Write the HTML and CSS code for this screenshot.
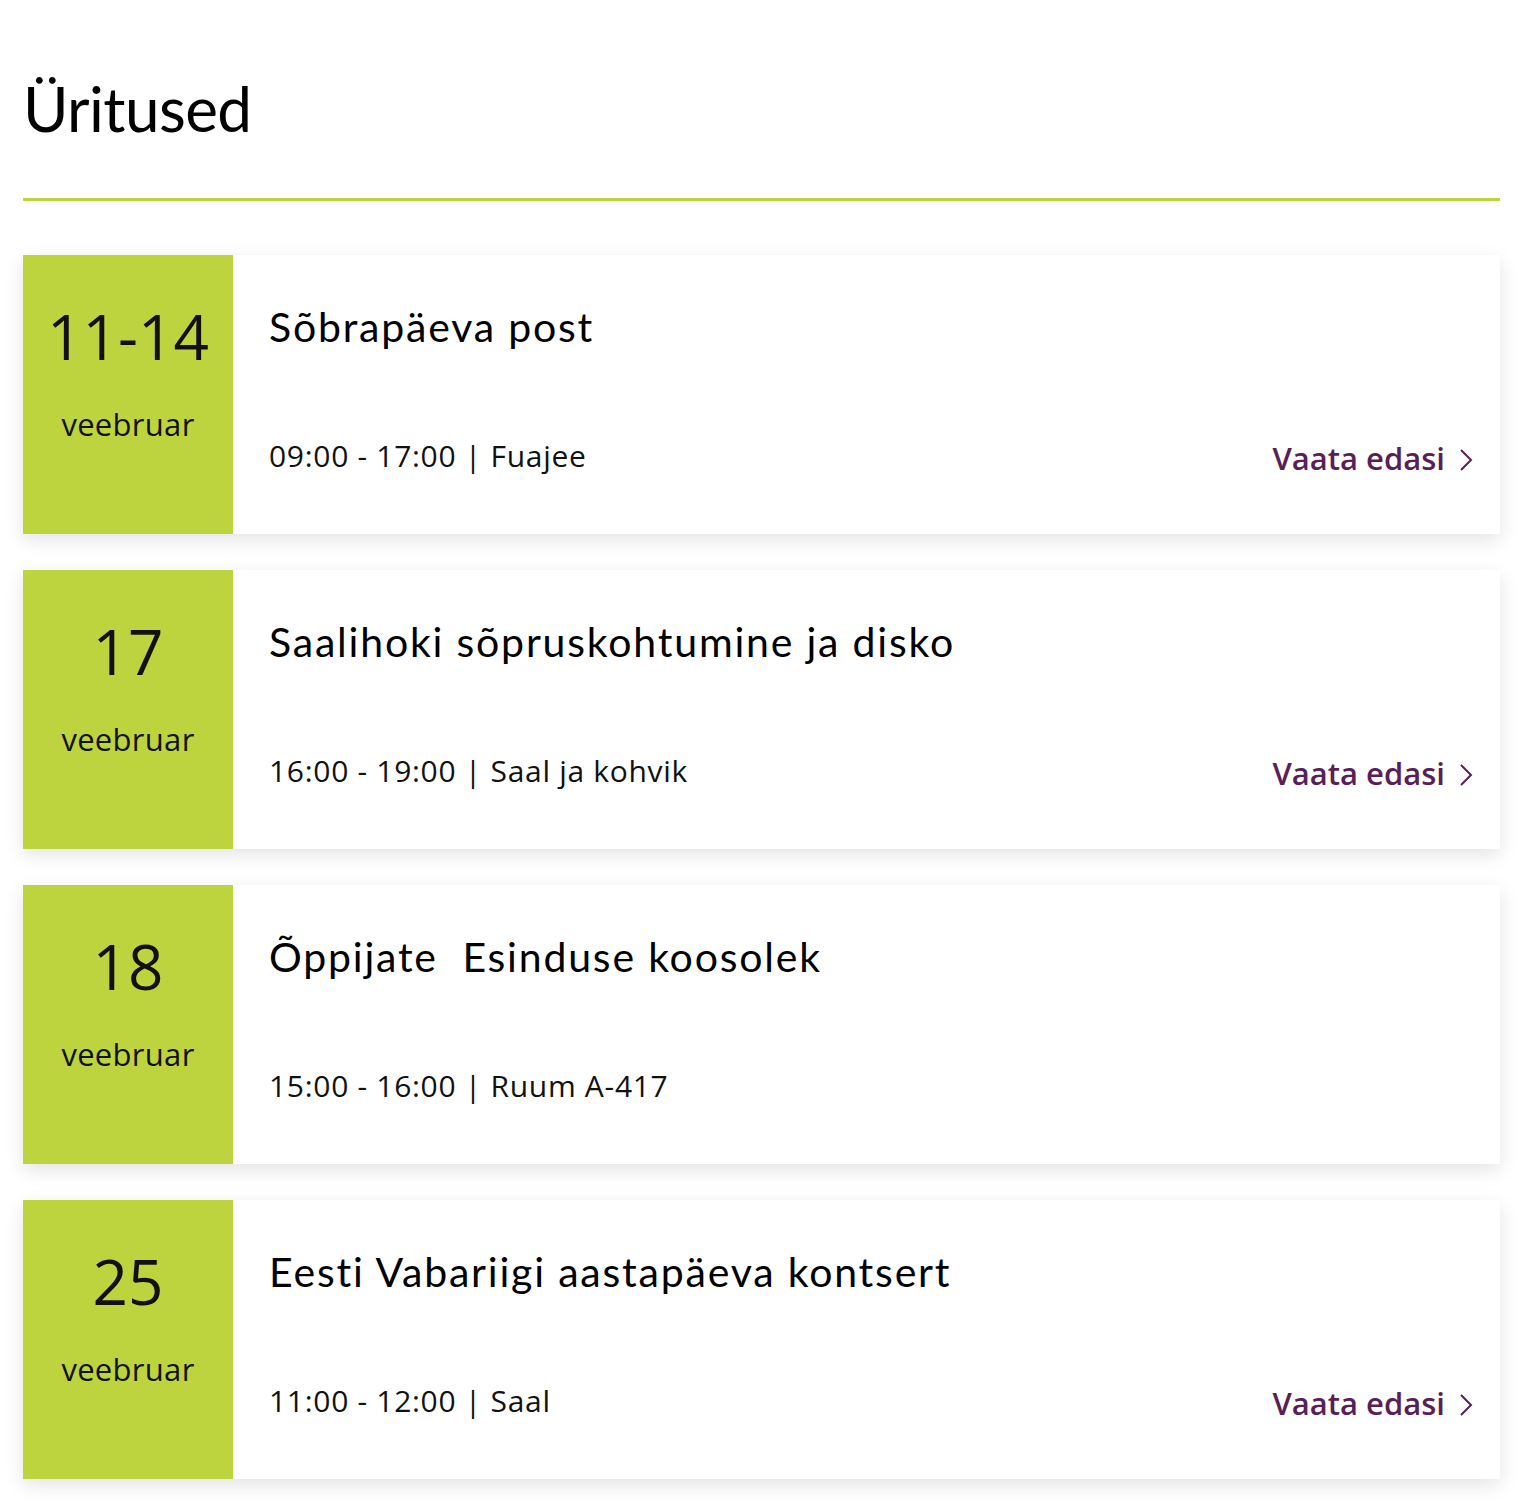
FILE: index.html
```html
<!DOCTYPE html>
<html lang="et">
<head>
<meta charset="utf-8">
<title>Üritused</title>
<link rel="stylesheet" href="styles.css">
</head>
<body>
<main class="page">
  <h1 class="page-title">Üritused</h1>
  <div class="rule"></div>
  <div class="events">
    <article class="event">
      <div class="event-date">
        <div class="event-day">11-14</div>
        <div class="event-month">veebruar</div>
      </div>
      <div class="event-body">
        <h2 class="event-title">Sõbrapäeva post</h2>
        <div class="event-foot">
          <span class="event-meta">09:00 - 17:00 | Fuajee</span>
          <a class="event-link" href="#">Vaata edasi<svg class="chev" viewBox="0 0 14 24" width="14" height="24"><path d="M2 2 L12 12 L2 22" fill="none" stroke="currentColor" stroke-width="2"/></svg></a>
        </div>
      </div>
    </article>
    <article class="event">
      <div class="event-date">
        <div class="event-day">17</div>
        <div class="event-month">veebruar</div>
      </div>
      <div class="event-body">
        <h2 class="event-title">Saalihoki sõpruskohtumine ja disko</h2>
        <div class="event-foot">
          <span class="event-meta">16:00 - 19:00 | Saal ja kohvik</span>
          <a class="event-link" href="#">Vaata edasi<svg class="chev" viewBox="0 0 14 24" width="14" height="24"><path d="M2 2 L12 12 L2 22" fill="none" stroke="currentColor" stroke-width="2"/></svg></a>
        </div>
      </div>
    </article>
    <article class="event">
      <div class="event-date">
        <div class="event-day">18</div>
        <div class="event-month">veebruar</div>
      </div>
      <div class="event-body">
        <h2 class="event-title">Õppijate&nbsp; Esinduse koosolek</h2>
        <div class="event-foot">
          <span class="event-meta">15:00 - 16:00 | Ruum A-417</span>
        </div>
      </div>
    </article>
    <article class="event">
      <div class="event-date">
        <div class="event-day">25</div>
        <div class="event-month">veebruar</div>
      </div>
      <div class="event-body">
        <h2 class="event-title">Eesti Vabariigi aastapäeva kontsert</h2>
        <div class="event-foot">
          <span class="event-meta">11:00 - 12:00 | Saal</span>
          <a class="event-link" href="#">Vaata edasi<svg class="chev" viewBox="0 0 14 24" width="14" height="24"><path d="M2 2 L12 12 L2 22" fill="none" stroke="currentColor" stroke-width="2"/></svg></a>
        </div>
      </div>
    </article>
  </div>
</main>
</body>
</html>
```
FILE: styles.css
```css
* { box-sizing: border-box; }
html, body { margin: 0; padding: 0; background: #fff; }
body {
  font-family: "Open Sans", "Liberation Sans", sans-serif;
  color: #111;
}
.page {
  padding: 77px 20px 30px 23px;
}
.page-title {
  margin: 0;
  font-family: Lato, "Noto Sans", sans-serif;
  font-weight: 400;
  font-size: 62px;
  line-height: 62px;
  letter-spacing: -0.6px;
  color: #000;
}
.rule {
  margin-top: 59px;
  height: 3px;
  background: #bdd43e;
}
.events {
  margin-top: 54px;
  display: flex;
  flex-direction: column;
  gap: 36px;
}
.event {
  display: flex;
  min-height: 279px;
  background: #fff;
  box-shadow: 0 6px 18px rgba(0, 0, 0, 0.11);
}
.event-date {
  width: 210px;
  flex: 0 0 210px;
  background: #bdd43e;
  text-align: center;
  padding-top: 50px;
}
.event-day {
  font-size: 62px;
  line-height: 62px;
  font-weight: 400;
}
.event-month {
  margin-top: 42px;
  font-size: 31px;
  line-height: 31px;
  letter-spacing: 0.3px;
}
.event-body {
  flex: 1;
  display: flex;
  flex-direction: column;
  padding: 51px 27px 60px 36px;
}
.event-title {
  margin: 0;
  font-family: Lato, "Noto Sans", sans-serif;
  font-weight: 400;
  font-size: 41px;
  line-height: 41px;
  letter-spacing: 1.8px;
  color: #000;
}
.event-foot {
  margin-top: auto;
  display: flex;
  justify-content: space-between;
  align-items: flex-end;
}
.event-meta {
  font-size: 30px;
  line-height: 30px;
  letter-spacing: 0.7px;
  margin-bottom: 3px;
}
.event-link {
  display: flex;
  align-items: center;
  gap: 14px;
  color: #5a1e58;
  text-decoration: none;
  font-size: 31px;
  line-height: 31px;
  font-weight: 600;
}
.chev {
  display: block;
  margin-top: 2px;
}
```
